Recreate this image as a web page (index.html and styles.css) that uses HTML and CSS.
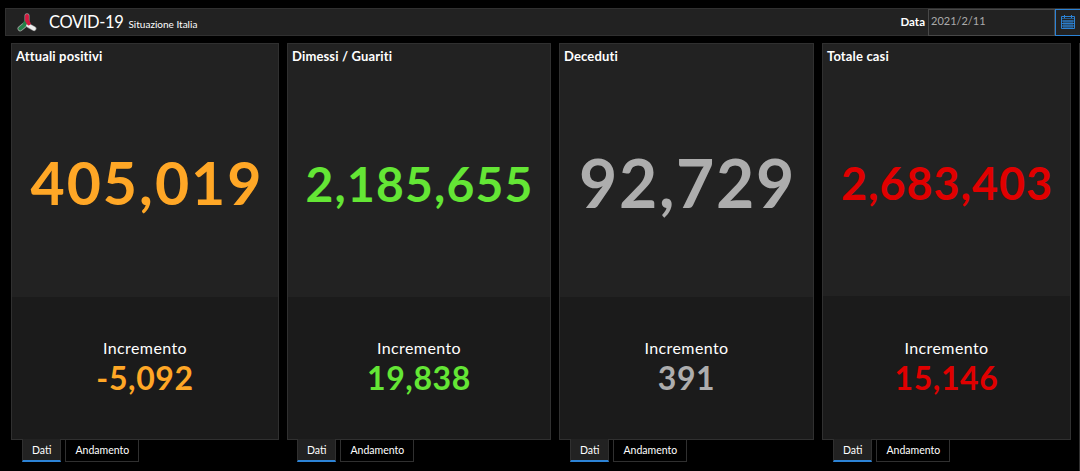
FILE: index.html
```html
<!DOCTYPE html>
<html lang="it">
<head>
  <meta charset="UTF-8" />
  <meta name="viewport" content="width=device-width, initial-scale=1.0" />
  <title>COVID-19 Situazione Italia</title>
  <link rel="stylesheet" href="styles.css">
</head>
<body>

  <header class="topbar">
    <svg class="logo" viewBox="0 0 20 19">
      <g fill="none" stroke-linecap="round">
        <path d="M10 2.8V7.5" stroke="#999" stroke-width="5" />
        <path d="M3.2 15.6L7.5 12.2" stroke="#999" stroke-width="5.4" />
        <path d="M11.5 12.6L17 15.6" stroke="#888" stroke-width="5" />
        <path d="M10.6 12L17 15.6" stroke="#eee" stroke-width="3.6" />
        <path d="M3.2 15.6L7.3 12.2L8.4 9.5" stroke="#258048" stroke-width="3.8" />
        <path d="M10 2.8V7.5L11.8 10.4" stroke="#d5193f" stroke-width="3.8" />
      </g>
    </svg>
    <h1>COVID-19</h1>
    <span class="subtitle">Situazione Italia</span>
    <label for="data">Data</label>
    <input type="text" id="data" value="2021/2/11" />
    <button class="calendar" aria-label="Calendario">
      <svg viewBox="0 0 14 14" fill="none" stroke="#2c83d6">
        <path d="M0.5 1.5H13.5V13.5H0.5Z" />
        <path d="M0 3.5H14" stroke-opacity="0.6" />
        <path d="M3.5 0V3M10.5 0V3" />
        <path d="M1 6H13M1 8.5H13M1 11H13M3 5V13M5 5V13M7 5V13M9 5V13M11 5V13" stroke-width="0.9" />
      </svg>
    </button>
  </header>

  <main class="cards">
    <section class="card positivi">
      <div class="panel">
        <h2>Attuali positivi</h2>
        <div class="total"><span>405,019</span></div>
        <div class="increment">
          <p>Incremento</p>
          <strong>-5,092</strong>
        </div>
      </div>
      <nav class="tabs"><a class="active">Dati</a><a>Andamento</a></nav>
    </section>

    <section class="card guariti">
      <div class="panel">
        <h2>Dimessi / Guariti</h2>
        <div class="total"><span>2,185,655</span></div>
        <div class="increment">
          <p>Incremento</p>
          <strong>19,838</strong>
        </div>
      </div>
      <nav class="tabs"><a class="active">Dati</a><a>Andamento</a></nav>
    </section>

    <section class="card deceduti">
      <div class="panel">
        <h2>Deceduti</h2>
        <div class="total"><span>92,729</span></div>
        <div class="increment">
          <p>Incremento</p>
          <strong>391</strong>
        </div>
      </div>
      <nav class="tabs"><a class="active">Dati</a><a>Andamento</a></nav>
    </section>

    <section class="card casi">
      <div class="panel">
        <h2>Totale casi</h2>
        <div class="total"><span>2,683,403</span></div>
        <div class="increment">
          <p>Incremento</p>
          <strong>15,146</strong>
        </div>
      </div>
      <nav class="tabs"><a class="active">Dati</a><a>Andamento</a></nav>
    </section>

    <div class="next"></div>
  </main>

</body>
</html>
```
FILE: styles.css
```css
* {
  box-sizing: border-box;
}
body {
  margin: 0;
  height: 471px;
  overflow: hidden;
  background-color: #000;
  color: #fff;
  font-family: Lato, sans-serif;
}

/* Barra superiore */
.topbar {
  display: flex;
  align-items: center;
  height: 28px;
  margin: 8px 0 7px 5px;
  padding-left: 11px;
  background-color: #222;
  border: 1px solid #303030;
  border-right: none;
}
.logo {
  width: 20px;
  height: 19px;
  margin-right: 12px;
}
h1 {
  margin: 0;
  font-size: 16.5px;
  font-weight: 400;
  line-height: 26px;
  letter-spacing: -0.35px;
}
.subtitle {
  margin: 4px auto 0 5px;
  font-size: 10px;
}
label {
  font-size: 11.5px;
  font-weight: 700;
  margin: -1px 3px 0 0;
}
input {
  width: 127px;
  height: 27px;
  padding: 0 2px 3px;
  background-color: #222;
  border: 1px solid #484848;
  color: #aaa;
  font-family: Lato, sans-serif;
  font-size: 11px;
}
.calendar {
  display: flex;
  align-items: center;
  justify-content: center;
  width: 25px;
  height: 27px;
  padding: 0;
  background-color: #222;
  border: 1px solid #2c83d6;
  border-right: none;
}
.calendar svg {
  width: 14px;
  height: 14px;
}

/* Riquadri */
.cards {
  display: grid;
  grid-template-columns: 268px 264px 255px 249px 1px;
  column-gap: 8px;
  margin-left: 11px;
}
.panel {
  display: flex;
  flex-direction: column;
  height: 397px;
  background-color: #222;
  border: 1px solid #303030;
}
h2 {
  height: 24px;
  margin: 0;
  padding-left: 4px;
  font-size: 13px;
  font-weight: 700;
  line-height: 24px;
  letter-spacing: 0.15px;
}
.total {
  flex: 1;
  display: flex;
  justify-content: center;
  font-weight: 700;
  white-space: nowrap;
}
.increment {
  height: 142px;
  padding-top: 41px;
  background-color: #1b1b1b;
  text-align: center;
}
.increment p {
  margin: 0;
  font-size: 16px;
  line-height: 20px;
  letter-spacing: 0.4px;
}
.increment strong {
  display: block;
  font-size: 32px;
  font-weight: 700;
  line-height: 40px;
  letter-spacing: 0.6px;
}
.positivi .total {
  padding: 80px 0 0 4px;
  font-size: 59px;
  line-height: 70px;
  letter-spacing: 2px;
}
.guariti .total {
  padding: 81px 0 0 1px;
  font-size: 48px;
  line-height: 70px;
  letter-spacing: 1.2px;
}
.deceduti .total {
  padding: 80px 0 0 2px;
  font-size: 66px;
  line-height: 70px;
  letter-spacing: 1.7px;
}
.casi .total {
  padding: 80px 0 0 1px;
  font-size: 45px;
  line-height: 70px;
  letter-spacing: 0.9px;
}
.casi .increment {
  height: 143px;
  padding-top: 42px;
}
.positivi .total, .positivi strong {
  color: #ffa726;
}
.guariti .total, .guariti strong {
  color: #64e635;
}
.deceduti .total, .deceduti strong {
  color: #adadad;
}
.casi .total, .casi strong {
  color: #e00000;
}

/* Schede sotto ai riquadri */
.tabs {
  display: flex;
  gap: 4px;
  margin: -1px 0 0 11px;
}
.guariti .tabs {
  margin-left: 10px;
}
.tabs a {
  height: 23px;
  padding: 0 9px;
  border: 1px solid #303030;
  border-top: none;
  font-size: 10.5px;
  line-height: 22px;
}
.tabs .active {
  background-color: #222;
  border-bottom: 2px solid #2c83d6;
}
.next {
  height: 428px;
  background-color: #303030;
}
```
